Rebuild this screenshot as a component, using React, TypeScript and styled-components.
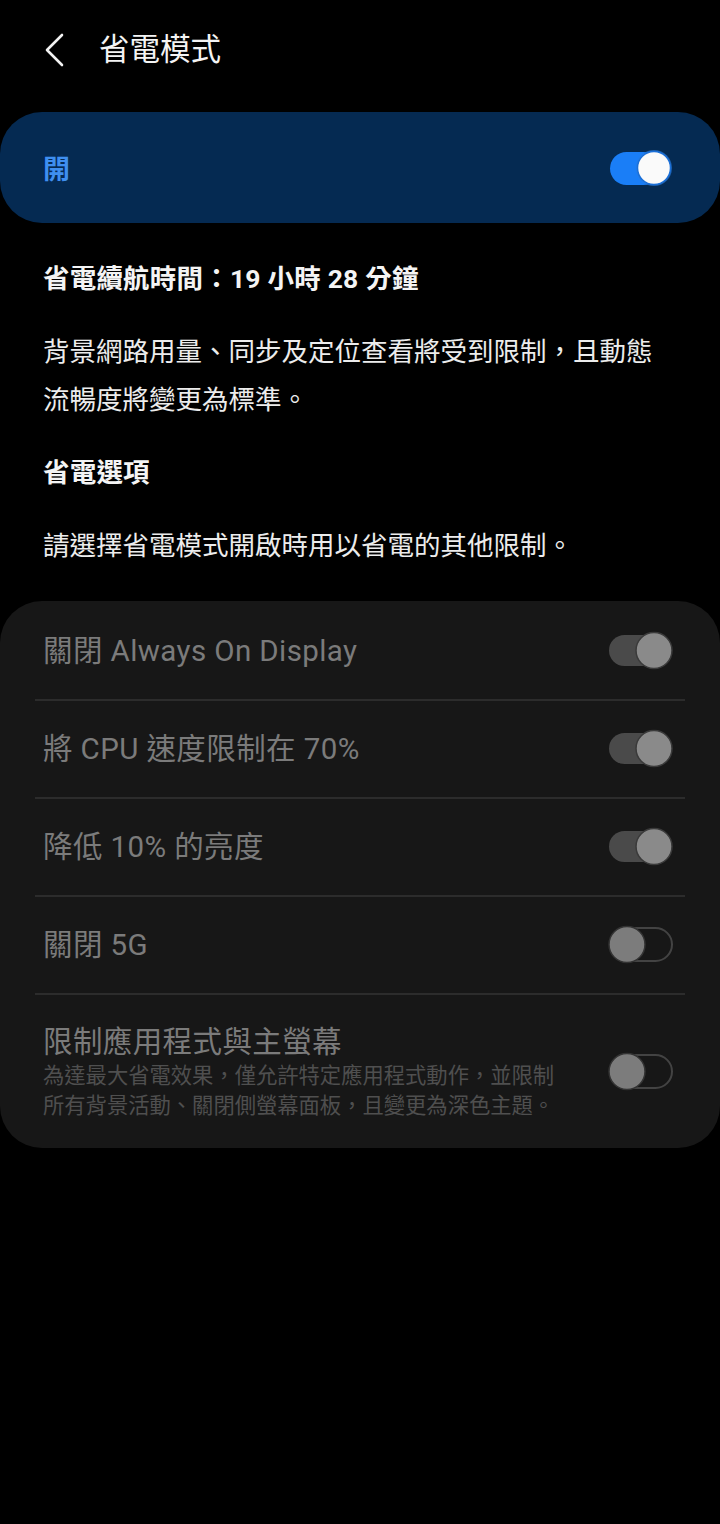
import styled, { createGlobalStyle } from 'styled-components';

const GlobalStyle = createGlobalStyle`
  html, body {
    margin: 0;
    padding: 0;
    background: #000;
  }
  body {
    font-family: Roboto, "Noto Sans CJK TC", "Noto Sans", sans-serif;
    color: #fff;
  }
`;

const Page = styled.div`
  width: 720px;
  min-height: 1524px;
  background: #000;
  display: flex;
  flex-direction: column;
`;

const Header = styled.header`
  height: 100px;
  display: flex;
  align-items: center;
  padding-left: 44px;
  gap: 33px;
`;

const BackButton = styled.button`
  background: none;
  border: none;
  padding: 0;
  width: 22px;
  height: 34px;
  display: flex;
  align-items: center;
  justify-content: center;
  cursor: pointer;
`;

const Title = styled.h1`
  margin: 0;
  font-size: 30.5px;
  font-weight: 400;
  line-height: 40px;
  color: #f4f4f4;
`;

const MasterCard = styled.div`
  margin-top: 12px;
  height: 111px;
  border-radius: 42px;
  background: #052a52;
  display: flex;
  align-items: center;
  justify-content: space-between;
  padding: 0 46px 0 43px;
`;

const MasterLabel = styled.span`
  font-size: 27px;
  font-weight: 700;
  color: #3f8ff0;
`;

const Info = styled.section`
  display: flex;
  flex-direction: column;
  gap: 25px;
  padding: 32px 57px 31px 43px;
`;

const Heading = styled.h2`
  margin: 0;
  font-size: 26.5px;
  font-weight: 700;
  line-height: 48px;
  letter-spacing: 0.2px;
  color: #f4f4f4;
`;

const Paragraph = styled.p`
  margin: 0;
  font-size: 26.5px;
  font-weight: 400;
  line-height: 48px;
  color: #ececec;
`;

const OptionsCard = styled.div`
  background: #171717;
  border-radius: 42px;
  display: flex;
  flex-direction: column;
  padding-top: 2px;
`;

const Row = styled.div<{ $tall?: boolean }>`
  min-height: ${({ $tall }) => ($tall ? '153px' : '96px')};
  display: flex;
  align-items: center;
  justify-content: space-between;
  padding: 0 46px 0 43px;
  box-sizing: border-box;
`;

const Divider = styled.div`
  height: 2px;
  margin: 0 35px;
  background: #2c2c2c;
`;

const RowText = styled.div`
  display: flex;
  flex-direction: column;
`;

const RowTitle = styled.span`
  font-size: 29.5px;
  line-height: 38px;
  letter-spacing: 0.4px;
  color: #7b7b7b;
`;

const RowSub = styled.span`
  font-size: 21.3px;
  line-height: 30px;
  color: #4f4f4f;
  max-width: 520px;
`;

type SwitchKind = 'active' | 'dimOn' | 'dimOff';

const Switch = ({ kind }: { kind: SwitchKind }) => {
  if (kind === 'active') {
    return (
      <svg width="66" height="40" viewBox="0 0 66 40">
        <rect x="2" y="4" width="50" height="33" rx="16.5" fill="#1a7ef7" />
        <circle cx="46" cy="20" r="18" fill="#2a7de0" opacity="0.6" />
        <circle cx="46" cy="20" r="16.5" fill="#fafafa" stroke="#1a6fd8" strokeWidth="1.5" />
      </svg>
    );
  }
  if (kind === 'dimOn') {
    return (
      <svg width="66" height="40" viewBox="0 0 66 40">
        <rect x="1" y="4" width="50" height="31" rx="15.5" fill="#4a4a4a" />
        <circle cx="46" cy="19.5" r="18" fill="#8a8a8a" stroke="#3a3a3a" strokeWidth="1.5" />
      </svg>
    );
  }
  return (
    <svg width="66" height="40" viewBox="0 0 66 40">
      <rect x="3" y="3" width="61" height="33" rx="16.5" fill="none" stroke="#434343" strokeWidth="2" />
      <circle cx="19" cy="19.5" r="18" fill="#7c7c7c" stroke="#333" strokeWidth="1.5" />
    </svg>
  );
};

const options: { title: string; sub?: string; kind: SwitchKind }[] = [
  { title: '關閉 Always On Display', kind: 'dimOn' },
  { title: '將 CPU 速度限制在 70%', kind: 'dimOn' },
  { title: '降低 10% 的亮度', kind: 'dimOn' },
  { title: '關閉 5G', kind: 'dimOff' },
  {
    title: '限制應用程式與主螢幕',
    sub: '為達最大省電效果，僅允許特定應用程式動作，並限制所有背景活動、關閉側螢幕面板，且變更為深色主題。',
    kind: 'dimOff',
  },
];

const App = () => {
  return (
    <Page>
      <GlobalStyle />
      <Header>
        <BackButton aria-label="back">
          <svg width="22" height="34" viewBox="0 0 22 34">
            <polyline
              points="18,2 3,17 18,32"
              fill="none"
              stroke="#f2f2f2"
              strokeWidth="2.6"
              strokeLinecap="round"
              strokeLinejoin="round"
            />
          </svg>
        </BackButton>
        <Title>省電模式</Title>
      </Header>

      <MasterCard>
        <MasterLabel>開</MasterLabel>
        <Switch kind="active" />
      </MasterCard>

      <Info>
        <Heading>省電續航時間：19 小時 28 分鐘</Heading>
        <Paragraph>背景網路用量、同步及定位查看將受到限制，且動態流暢度將變更為標準。</Paragraph>
        <Heading>省電選項</Heading>
        <Paragraph>請選擇省電模式開啟時用以省電的其他限制。</Paragraph>
      </Info>

      <OptionsCard>
        {options.map((opt, i) => (
          <div key={opt.title}>
            {i > 0 && <Divider />}
            <Row $tall={!!opt.sub}>
              <RowText>
                <RowTitle>{opt.title}</RowTitle>
                {opt.sub && <RowSub>{opt.sub}</RowSub>}
              </RowText>
              <Switch kind={opt.kind} />
            </Row>
          </div>
        ))}
      </OptionsCard>
    </Page>
  );
};

export default App;
